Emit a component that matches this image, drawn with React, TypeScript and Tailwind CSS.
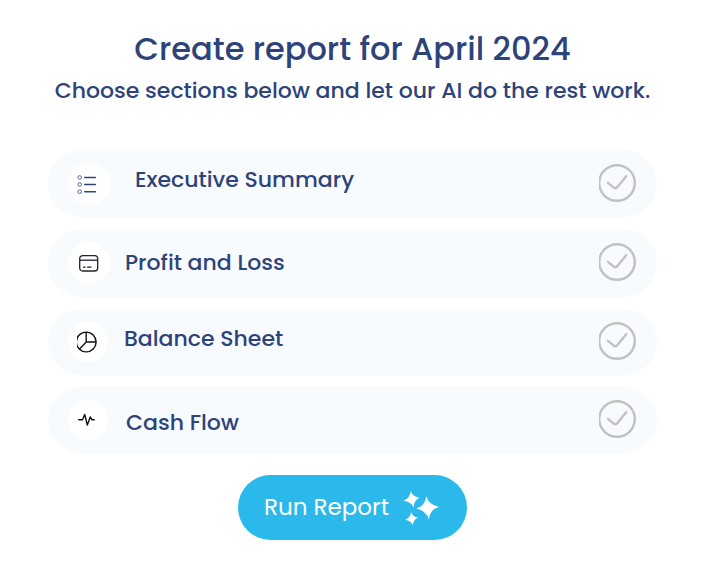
import React from "react";

interface Section {
  id: string;
  label: string;
  icon: React.ReactNode;
  rowClass: string;
  badgeClass: string;
  labelClass: string;
}

const sections: Section[] = [
  {
    id: "executive-summary",
    label: "Executive Summary",
    icon: <ListIcon />,
    rowClass: "h-[67px]",
    badgeClass: "size-[42px]",
    labelClass: "pl-[25px] pb-2",
  },
  {
    id: "profit-and-loss",
    label: "Profit and Loss",
    icon: <CardIcon />,
    rowClass: "h-[68px]",
    badgeClass: "size-[42px]",
    labelClass: "pl-[15px]",
  },
  {
    id: "balance-sheet",
    label: "Balance Sheet",
    icon: <PieIcon />,
    rowClass: "h-[66px]",
    badgeClass: "size-10",
    labelClass: "pl-4 pb-1.5",
  },
  {
    id: "cash-flow",
    label: "Cash Flow",
    icon: <PulseIcon />,
    rowClass: "h-[66px]",
    badgeClass: "size-10",
    labelClass: "pl-[18px] pt-1.5",
  },
];

function ListIcon() {
  return (
    <svg className="w-6 h-6" viewBox="0 0 24 24" fill="none" stroke="#2d4379">
      <g strokeWidth={0.8}>
        <circle cx="2.7" cy="5.5" r="1.8" />
        <circle cx="2.7" cy="12.5" r="1.8" />
        <circle cx="2.7" cy="19.7" r="1.8" />
      </g>
      <path d="M7.8 5.5h10.5M7.8 12.5h10.5M7.8 19.7h10.5" strokeWidth={1.6} strokeLinecap="round" />
    </svg>
  );
}

function CardIcon() {
  return (
    <svg className="w-5 h-5" viewBox="0 0 20 20" fill="none" stroke="#20242c" strokeWidth={1.3}>
      <rect x="0.7" y="2.6" width="18" height="15.4" rx="3" />
      <path d="M1 7.2h18" />
      <path d="M4.5 14.2h1.5M8.5 14.2h3.5" strokeLinecap="round" />
    </svg>
  );
}

function PieIcon() {
  return (
    <svg className="w-[22px] h-[22px]" viewBox="0 0 22 22" fill="none" stroke="#111111" strokeWidth={1.4}>
      <circle cx="9.2" cy="11" r="9.9" />
      <path d="M9.2 1v10h10M9.2 11l-6.8 7.2" />
    </svg>
  );
}

function PulseIcon() {
  return (
    <svg
      className="w-5 h-5"
      viewBox="0 0 20 20"
      fill="none"
      stroke="#111111"
      strokeWidth={1.4}
      strokeLinecap="round"
      strokeLinejoin="round"
    >
      <path d="M0.7 9.7h3.8l2.2-5.2 2.6 10.6 3-8.2 1.600 2.800h2.300" />
    </svg>
  );
}

function CheckIcon() {
  return (
    <svg
      className="col-start-1 row-start-1 size-[38px] pointer-events-none"
      viewBox="0 0 38 38"
      fill="none"
      stroke="currentColor"
      strokeLinecap="round"
      strokeLinejoin="round"
    >
      <circle cx="18" cy="19" r="17.8" strokeWidth={2.4} />
      <path d="M9 18.8l6 5q1.6 1.2 3-.4l9.2-11.2" strokeWidth={2.4} />
    </svg>
  );
}

function SparklesIcon() {
  return (
    <svg className="w-9 h-9" viewBox="0 0 36 36" fill="currentColor">
      <path d="M23.3 6q2 8.600 12.700 10.900-9.200 2.300-10.100 12.600-2.500-8.700-12.500-11 8.800-2.500 9.900-12.500z" />
      <path d="M7.8 1.300q1.700 5.300 8.700 6.500-5.500 2.100-5.800 9.700-2.400-5.900-10.200-6.800 6.600-2.700 7.300-9.400z" />
      <path d="M8.200 22.200q1.700 4.800 6.800 5.200-4.500 2.200-5.300 7.700-2.100-4.500-7.400-5.300 4.800-2.200 5.900-7.600z" />
    </svg>
  );
}

function SectionRow({ section }: { section: Section }) {
  return (
    <label
      htmlFor={section.id}
      className={`flex items-center rounded-full bg-[#f7fbfe] px-5 cursor-pointer ${section.rowClass}`}
    >
      <span
        className={`flex shrink-0 items-center justify-center rounded-full bg-white ${section.badgeClass}`}
      >
        {section.icon}
      </span>
      <span className={`flex-1 text-[22px] leading-8 font-medium ${section.labelClass}`}>
        {section.label}
      </span>
      <span className="grid shrink-0 pb-0.5 text-[#c1c1c1] has-checked:text-[#2bb9eb]">
        <input
          id={section.id}
          type="checkbox"
          className="col-start-1 row-start-1 size-[38px] appearance-none rounded-full cursor-pointer"
        />
        <CheckIcon />
      </span>
    </label>
  );
}

export default function App() {
  return (
    <main className="flex flex-col bg-white px-12 pt-[29px] pb-6 text-[#2d4379] font-['Poppins','Inter',sans-serif]">
      <header className="text-center whitespace-nowrap">
        <h1 className="text-[32px] leading-10 font-medium">Create report for April 2024</h1>
        <p className="mt-1 flex justify-center text-[22px] leading-9 font-medium">
          Choose sections below and let our AI do the rest work.
        </p>
      </header>

      <form className="mt-[41px] flex flex-col gap-3">
        {sections.map((section) => (
          <SectionRow key={section.id} section={section} />
        ))}

        <button
          type="button"
          className="mt-2.5 flex h-[65px] items-center gap-3.5 self-center rounded-full bg-[#2bb9eb] pl-[26px] pr-7 text-[23px] text-white"
        >
          Run Report
          <SparklesIcon />
        </button>
      </form>
    </main>
  );
}
